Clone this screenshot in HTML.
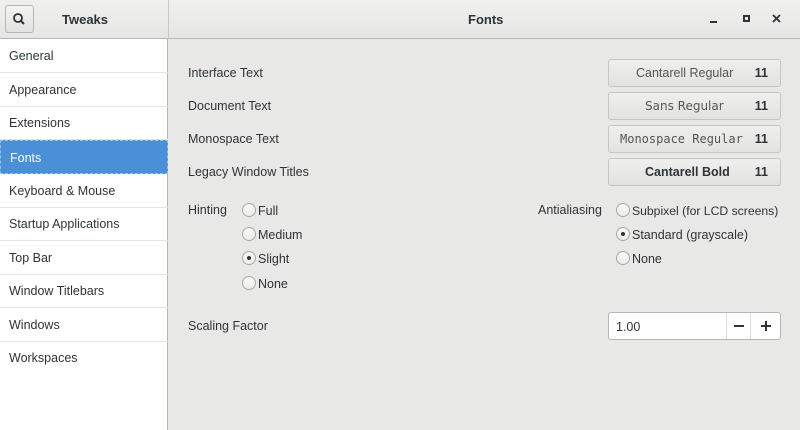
<!DOCTYPE html><html><head><style>
*{margin:0;padding:0;box-sizing:border-box}
body{width:800px;height:430px;overflow:hidden;background:#e8e8e7;font-family:"Liberation Sans",sans-serif;font-size:12.5px;color:#2e3436;position:relative}
.a{position:absolute}
.hdr{left:0;top:0;width:800px;height:39px;background:linear-gradient(#f0f0ef,#e6e6e5);border-bottom:1px solid #b6b6b3}
.side{left:0;top:39px;width:168px;height:391px;background:#fff;border-right:1px solid #b6b6b3}
.row{position:absolute;left:0;width:168px;height:34px;border-bottom:1px solid #e4e4e2;padding-left:9px;line-height:35px;font-size:12.5px}
.sel{background:#4a90d9;color:#fff;border:1px dashed #9cc0ea}
.btn{position:absolute;left:608px;width:173px;height:28px;border:1px solid #c5c5c1;border-radius:3px;background:linear-gradient(#efefee,#e2e2e0);line-height:27px;font-size:12.5px;color:#555}
.btn .n{position:absolute;right:12px;font-weight:bold;color:#2e3436}
.lbl{position:absolute;left:188px}
.r{position:absolute;width:14px;height:14px;border:1px solid #a8a8a4;border-radius:50%;background:linear-gradient(#fafafa,#ececea)}
.r.on::after{content:"";position:absolute;left:4px;top:4px;width:4px;height:4px;border-radius:50%;background:#2e3436}
.rt{position:absolute}
</style></head><body>
<div class="a hdr"></div>
<div class="a" style="left:168px;top:0;width:1px;height:39px;background:#c8c8c5"></div>
<div class="a" style="left:5px;top:5px;width:29px;height:28px;border:1px solid #b6b6b3;border-radius:3px;background:linear-gradient(#f4f4f3,#e2e2e0)">
<svg width="27" height="26"><circle cx="12" cy="12" r="4" fill="none" stroke="#2e3436" stroke-width="1.8"/><line x1="15" y1="15" x2="18" y2="18" stroke="#2e3436" stroke-width="2"/></svg></div>
<div class="a" style="left:62px;top:12px;font-weight:bold;font-size:13px">Tweaks</div>
<div class="a" style="left:468px;top:12px;font-weight:bold;font-size:13px">Fonts</div>
<div class="a" style="left:710px;top:21px;width:7px;height:2px;background:#2e3436"></div>
<div class="a" style="left:743px;top:15px;width:7px;height:7px;border:2px solid #2e3436"></div>
<svg class="a" style="left:772px;top:14px" width="9" height="9"><path d="M1 1L8 8M8 1L1 8" stroke="#2e3436" stroke-width="1.8"/></svg>
<div class="a side">
<div class="row" style="top:0">General</div>
<div class="row" style="top:34px">Appearance</div>
<div class="row" style="top:67px">Extensions</div>
<div class="row sel" style="top:101px">Fonts</div>
<div class="row" style="top:135px">Keyboard &amp; Mouse</div>
<div class="row" style="top:168px">Startup Applications</div>
<div class="row" style="top:202px">Top Bar</div>
<div class="row" style="top:235px">Window Titlebars</div>
<div class="row" style="top:269px">Windows</div>
<div class="row" style="top:302px;border:none">Workspaces</div>
</div>
<div class="lbl" style="top:66px">Interface Text</div>
<div class="lbl" style="top:99px">Document Text</div>
<div class="lbl" style="top:132px">Monospace Text</div>
<div class="lbl" style="top:165px">Legacy Window Titles</div>
<div class="btn" style="top:59px"><span style="position:absolute;left:27px">Cantarell Regular</span><span class="n">11</span></div>
<div class="btn" style="top:92px"><span style="position:absolute;left:36px;font-family:'DejaVu Sans';font-size:12px">Sans Regular</span><span class="n">11</span></div>
<div class="btn" style="top:125px"><span style="position:absolute;left:11px;font-family:'DejaVu Sans Mono','Liberation Mono';font-size:12px">Monospace Regular</span><span class="n">11</span></div>
<div class="btn" style="top:158px"><span style="position:absolute;left:36px;font-weight:bold;color:#2e3436">Cantarell Bold</span><span class="n">11</span></div>
<div class="lbl" style="top:203px">Hinting</div>
<div class="r" style="left:242px;top:203px"></div><div class="rt" style="left:258px;top:204px">Full</div>
<div class="r" style="left:242px;top:227px"></div><div class="rt" style="left:258px;top:228px">Medium</div>
<div class="r on" style="left:242px;top:251px"></div><div class="rt" style="left:258px;top:252px">Slight</div>
<div class="r" style="left:242px;top:276px"></div><div class="rt" style="left:258px;top:277px">None</div>
<div class="a" style="left:538px;top:203px">Antialiasing</div>
<div class="r" style="left:616px;top:203px"></div><div class="rt" style="left:632px;top:204px;font-size:12.2px">Subpixel (for LCD screens)</div>
<div class="r on" style="left:616px;top:227px"></div><div class="rt" style="left:632px;top:228px">Standard (grayscale)</div>
<div class="r" style="left:616px;top:251px"></div><div class="rt" style="left:632px;top:252px">None</div>
<div class="lbl" style="top:319px">Scaling Factor</div>
<div class="a" style="left:608px;top:312px;width:173px;height:28px;border:1px solid #b6b6b3;border-radius:3px;background:#fff">
<span style="position:absolute;left:7px;top:7px">1.00</span>
<div style="position:absolute;left:117px;top:0;width:1px;height:26px;background:#dcdcda"></div>
<div style="position:absolute;left:141px;top:0;width:1px;height:26px;background:#dcdcda"></div>
<div style="position:absolute;left:125px;top:12px;width:10px;height:1.5px;background:#2e3436"></div>
<div style="position:absolute;left:152px;top:12px;width:10px;height:1.5px;background:#2e3436"></div>
<div style="position:absolute;left:156px;top:8px;width:1.5px;height:10px;background:#2e3436"></div>
</div>
</body></html>
